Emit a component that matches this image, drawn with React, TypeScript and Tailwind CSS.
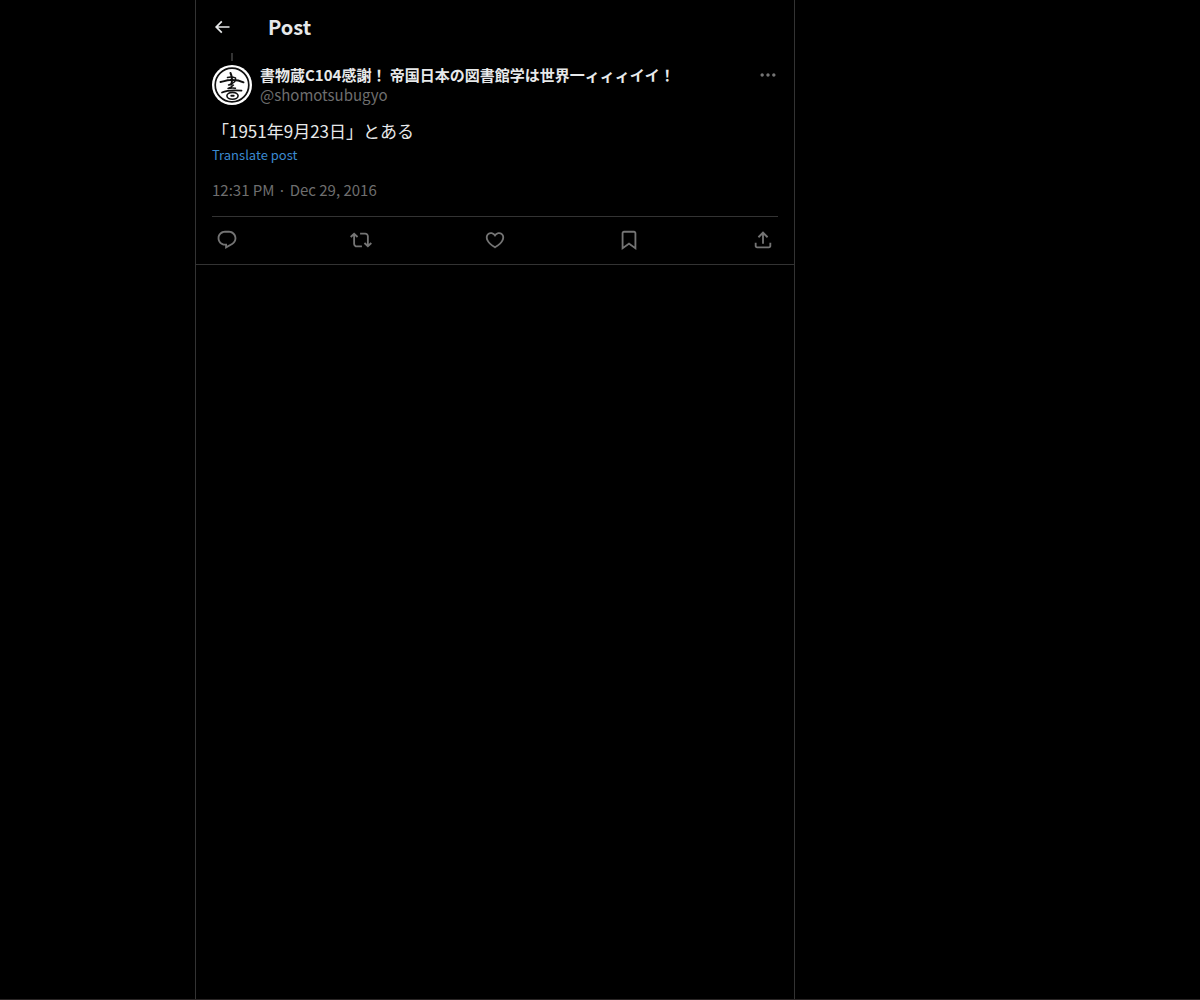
import React from "react";

const icons = {
  back: "M7.414 13l5.043 5.04-1.414 1.42L3.586 12l7.457-7.46 1.414 1.42L7.414 11H21v2H7.414z",
  more: "M3 12c0-1.1.9-2 2-2s2 .9 2 2-.9 2-2 2-2-.9-2-2zm9 2c1.1 0 2-.9 2-2s-.9-2-2-2-2 .9-2 2 .9 2 2 2zm7 0c1.1 0 2-.9 2-2s-.9-2-2-2-2 .9-2 2 .9 2 2 2z",
  reply:
    "M1.751 10c0-4.42 3.584-8 8.005-8h4.366c4.49 0 8.129 3.64 8.129 8.13 0 2.96-1.607 5.68-4.196 7.11l-8.054 4.46v-3.69h-.067c-4.49.1-8.183-3.51-8.183-8.01zm8.005-6c-3.317 0-6.005 2.69-6.005 6 0 3.37 2.77 6.08 6.138 6.01l.351-.01h1.761v2.3l5.087-2.81c1.951-1.08 3.163-3.13 3.163-5.36 0-3.39-2.744-6.13-6.129-6.13H9.756z",
  repost:
    "M4.5 3.88l4.432 4.14-1.364 1.46L5.5 7.55V16c0 1.1.896 2 2 2H13v2H7.5c-2.209 0-4-1.79-4-4V7.55L1.432 9.48.068 8.02 4.5 3.88zM16.5 6H11V4h5.5c2.209 0 4 1.79 4 4v8.45l2.068-1.93 1.364 1.46-4.432 4.14-4.432-4.14 1.364-1.46 2.068 1.93V8c0-1.1-.896-2-2-2z",
  like: "M16.697 5.5c-1.222-.06-2.679.51-3.89 2.16l-.805 1.09-.806-1.09C9.984 6.01 8.526 5.44 7.304 5.5c-1.243.07-2.349.78-2.91 1.91-.552 1.12-.633 2.78.479 4.82 1.074 1.97 3.257 4.27 7.129 6.61 3.87-2.34 6.052-4.64 7.126-6.61 1.111-2.04 1.03-3.7.477-4.82-.561-1.13-1.666-1.84-2.908-1.91zm4.187 7.69c-1.351 2.48-4.001 5.12-8.379 7.67l-.503.3-.504-.3c-4.379-2.55-7.029-5.19-8.382-7.67-1.36-2.5-1.41-4.86-.514-6.67.887-1.79 2.647-2.91 4.601-3.01 1.651-.09 3.368.56 4.798 2.01 1.429-1.45 3.146-2.1 4.796-2.01 1.954.1 3.714 1.22 4.601 3.01.896 1.81.846 4.17-.514 6.67z",
  bookmark:
    "M4 4.5C4 3.12 5.119 2 6.5 2h11C18.881 2 20 3.12 20 4.5v18.44l-8-5.71-8 5.71V4.5zM6.5 4c-.276 0-.5.22-.5.5v14.56l6-4.29 6 4.29V4.5c0-.28-.224-.5-.5-.5h-11z",
  share:
    "M12 2.59l5.7 5.7-1.41 1.42L13 6.41V16h-2V6.41l-3.3 3.3-1.41-1.42L12 2.59zM21 15l-.02 3.51c0 1.38-1.12 2.49-2.5 2.49H5.5C4.11 21 3 19.88 3 18.5V15h2v3.5c0 .28.22.5.5.5h12.98c.28 0 .5-.22.5-.5L19 15h2z",
};

type IconName = keyof typeof icons;

function Icon({ name, className }: { name: IconName; className: string }) {
  return (
    <svg viewBox="0 0 24 24" aria-hidden="true" fill="currentColor" className={className}>
      <path d={icons[name]} />
    </svg>
  );
}

function Avatar() {
  return (
    <svg viewBox="0 0 40 40" className="size-10" role="img" aria-label="Profile picture">
      <circle cx="20" cy="20" r="20" fill="#fff" />
      <g fill="none" stroke="#111" strokeLinecap="round" strokeLinejoin="round">
        <circle cx="20" cy="20" r="16.8" strokeWidth="1.7" />
        <path d="M18.500 8c1.600 3.500 1.800 7 1 11" strokeWidth="2" />
        <path d="M15.500 12.500c2.500-.8 5-.8 8 .4.600 1.400 0 2.600-1 4" strokeWidth="1.500" />
        <path d="M8.500 17c3.500-.6 6-2 9.500-2 5-.2 9.500.3 13.500 2.300" strokeWidth="1.900" />
        <path d="M21.500 17.500c-1.500 1.600-3.500 2-5 2.500 2-.2 3.500-.2 5 .1-1.500 1.600-3 2.600-5.500 3.400 2.500-.6 5-.6 7.500-.3" strokeWidth="1.400" />
        <path d="M10 27.500c4-1.800 9.500-2.600 19.500-1.800" strokeWidth="1.800" />
        <ellipse cx="20.500" cy="30.800" rx="5.600" ry="3.400" strokeWidth="1.600" />
        <path d="M19.300 30.700h2.400" strokeWidth="1.900" />
      </g>
    </svg>
  );
}

const actions: { name: IconName; label: string }[] = [
  { name: "reply", label: "Reply" },
  { name: "repost", label: "Repost" },
  { name: "like", label: "Like" },
  { name: "bookmark", label: "Bookmark" },
  { name: "share", label: "Share post" },
];

export default function App() {
  return (
    <div className="flex min-h-screen justify-center border-b border-[#2a2626] bg-black pr-[210px] font-['Noto_Sans_CJK_JP',sans-serif] text-[15px] leading-5 text-[#e7e9ea]">
      <main className="w-full max-w-[600px] border-x border-[#333333]">
        <header className="flex h-[53px] items-center gap-9 px-4">
          <button type="button" aria-label="Back" className="flex size-5 items-center justify-center">
            <Icon name="back" className="size-5" />
          </button>
          <h1 className="text-xl leading-6 font-bold">Post</h1>
        </header>

        <article className="border-b border-[#333333] px-4">
          <div className="flex w-10 justify-center pb-1">
            <div className="h-2 w-0.5 bg-[#333333]" />
          </div>
          <div className="flex items-start gap-2">
            <a href="#profile" className="shrink-0">
              <Avatar />
            </a>
            <div className="min-w-0 flex-1">
              <a href="#profile" className="block truncate font-bold">
                書物蔵C104感謝！ 帝国日本の図書館学は世界一ィィィイイ！
              </a>
              <a href="#profile" className="block text-[#6e6e6e]">
                @shomotsubugyo
              </a>
            </div>
            <button type="button" aria-label="More" className="flex size-5 items-center justify-center text-[#747474]">
              <Icon name="more" className="size-5" />
            </button>
          </div>

          <p lang="ja" className="pt-3 text-[17px] leading-7">
            「1951年9月23日」とある
          </p>
          <button type="button" className="block text-[13px] leading-5 text-[#3b8ad0]">
            Translate post
          </button>
          <p className="pt-[15px] pb-4 text-[#6e6e6e]">
            <a href="#post">12:31 PM · Dec 29, 2016</a>
          </p>

          <div className="flex h-12 items-start justify-between border-t border-[#333333] pt-2 text-[#747474]">
            {actions.map((a) => (
              <button key={a.name} type="button" aria-label={a.label} className="flex size-[30px] items-center justify-center">
                <Icon name={a.name} className="size-[22px]" />
              </button>
            ))}
          </div>
        </article>
      </main>
    </div>
  );
}
